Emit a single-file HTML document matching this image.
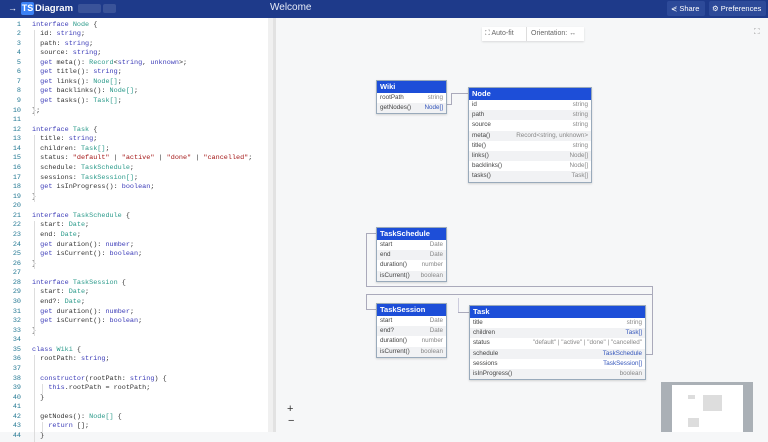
<!DOCTYPE html>
<html><head><meta charset="utf-8"><style>
*{margin:0;padding:0;box-sizing:border-box}
body{width:768px;height:432px;overflow:hidden;font-family:"Liberation Sans",sans-serif;background:#f6f7f8;position:relative}
.hdr{position:absolute;left:0;top:0;width:768px;height:18px;background:#1e3a8a;color:#fff}
.ed{position:absolute;left:0;top:18px;width:268px;height:414px;background:#fff;font-family:"Liberation Mono",monospace;font-size:6.8px;color:#333}
.ln{position:absolute;left:0;width:21px;text-align:right;color:#237893}
.cd{position:absolute;left:32px;white-space:pre;line-height:9px}
.k{color:#3b3bb8}.t{color:#2a9a8a}.s{color:#a31515}
.box{position:absolute;background:#fff;border:1px solid #9ab;box-shadow:0 1px 2px rgba(0,0,0,.15);font-size:6.3px;color:#444}
.box .h{background:#1d4ed8;color:#fff;font-size:7.5px;font-weight:bold;height:12px;line-height:12px;padding-left:3px}
.box .r{height:10.2px;line-height:10.2px;padding:0 3px;display:flex;justify-content:space-between}
.box .r:nth-child(odd){background:#f1f2f4}
.box .r span:last-child{color:#888}
.box .r span.l{color:#3355bb}
.ln2{position:absolute;background:#aab}
.g{position:absolute;width:1px;background:#ddd}
</style></head><body>
<div class="hdr">
<span style="position:absolute;left:8px;top:3px;font-size:9px">→</span>
<span style="position:absolute;left:21px;top:2px;width:13px;height:13px;background:#3b82f6;border-radius:2px;font-size:9px;font-weight:bold;line-height:13px;text-align:center">TS</span>
<span style="position:absolute;left:35px;top:3px;font-size:9.5px;font-weight:bold">Diagram</span>
<span style="position:absolute;left:78px;top:4px;width:23px;height:9px;background:#3a5399;border-radius:2px"></span>
<span style="position:absolute;left:103px;top:4px;width:13px;height:9px;background:#3a5399;border-radius:2px"></span>
<span style="position:absolute;left:270px;top:2px;font-size:10px;color:#e8ecf8">Welcome</span>
<span style="position:absolute;left:667px;top:1px;width:38px;height:15px;background:#2d4a99;border-radius:2px;font-size:7.5px;line-height:15px;padding-left:4px">⋞ Share</span>
<span style="position:absolute;left:709px;top:1px;width:57px;height:15px;background:#2d4a99;border-radius:2px;font-size:7.5px;line-height:15px;padding-left:3px">⚙ Preferences</span>
</div>
<div class="ed" id="ed"></div>
<div style="position:absolute;left:268px;top:18px;width:5px;height:414px;background:#f0f0f0"></div>
<div style="position:absolute;left:273px;top:18px;width:3px;height:414px;background:#e2e2e2"></div>

<div style="position:absolute;left:482px;top:27px;width:102px;height:14px;background:#fff;box-shadow:0 1px 2px rgba(0,0,0,.12);font-size:7px;color:#666;line-height:14px"><span style="padding-left:3px">⛶ Auto-fit</span><span style="position:absolute;left:44px;border-left:1px solid #ddd;padding-left:4px">Orientation: ↔</span></div>
<div style="position:absolute;left:754px;top:27px;font-size:8px;color:#999">⛶</div>

<div class="ln2" style="left:447px;top:104px;width:4px;height:1px"></div>
<div class="ln2" style="left:451px;top:93px;width:1px;height:12px"></div>
<div class="ln2" style="left:451px;top:93px;width:17px;height:1px"></div>
<div class="ln2" style="left:366px;top:233px;width:1px;height:53px"></div>
<div class="ln2" style="left:366px;top:233px;width:10px;height:1px"></div>
<div class="ln2" style="left:366px;top:286px;width:287px;height:1px"></div>
<div class="ln2" style="left:366px;top:294px;width:287px;height:1px"></div>
<div class="ln2" style="left:366px;top:294px;width:1px;height:15px"></div>
<div class="ln2" style="left:366px;top:309px;width:10px;height:1px"></div>
<div class="ln2" style="left:652px;top:286px;width:1px;height:68px"></div>
<div class="ln2" style="left:646px;top:354px;width:7px;height:1px"></div>
<div class="ln2" style="left:458px;top:298px;width:1px;height:14px;background:#ccd"></div>
<div class="ln2" style="left:458px;top:312px;width:11px;height:1px"></div>

<div class="box" style="left:376px;top:80px;width:71px"><div class="h">Wiki</div>
<div class="r"><span>rootPath</span><span>string</span></div>
<div class="r"><span>getNodes()</span><span class="l">Node[]</span></div></div>

<div class="box" style="left:468px;top:87px;width:124px"><div class="h">Node</div>
<div class="r"><span>id</span><span>string</span></div>
<div class="r"><span>path</span><span>string</span></div>
<div class="r"><span>source</span><span>string</span></div>
<div class="r"><span>meta()</span><span>Record&lt;string, unknown&gt;</span></div>
<div class="r"><span>title()</span><span>string</span></div>
<div class="r"><span>links()</span><span>Node[]</span></div>
<div class="r"><span>backlinks()</span><span>Node[]</span></div>
<div class="r"><span>tasks()</span><span>Task[]</span></div></div>

<div class="box" style="left:376px;top:227px;width:71px"><div class="h">TaskSchedule</div>
<div class="r"><span>start</span><span>Date</span></div>
<div class="r"><span>end</span><span>Date</span></div>
<div class="r"><span>duration()</span><span>number</span></div>
<div class="r"><span>isCurrent()</span><span>boolean</span></div></div>

<div class="box" style="left:376px;top:303px;width:71px"><div class="h">TaskSession</div>
<div class="r"><span>start</span><span>Date</span></div>
<div class="r"><span>end?</span><span>Date</span></div>
<div class="r"><span>duration()</span><span>number</span></div>
<div class="r"><span>isCurrent()</span><span>boolean</span></div></div>

<div class="box" style="left:469px;top:305px;width:177px"><div class="h">Task</div>
<div class="r"><span>title</span><span>string</span></div>
<div class="r"><span>children</span><span class="l">Task[]</span></div>
<div class="r"><span>status</span><span>"default" | "active" | "done" | "cancelled"</span></div>
<div class="r"><span>schedule</span><span class="l">TaskSchedule</span></div>
<div class="r"><span>sessions</span><span class="l">TaskSession[]</span></div>
<div class="r"><span>isInProgress()</span><span>boolean</span></div></div>

<div style="position:absolute;left:287px;top:403px;font-size:11px;color:#333">+</div>
<div style="position:absolute;left:288px;top:415px;font-size:11px;color:#333">−</div>
<div style="position:absolute;left:661px;top:382px;width:92px;height:50px;background:#aab0b6"></div>
<div style="position:absolute;left:672px;top:385px;width:71px;height:47px;background:#fff"></div>
<div style="position:absolute;left:688px;top:395px;width:7px;height:4px;background:#ddd"></div>
<div style="position:absolute;left:703px;top:395px;width:19px;height:16px;background:#ddd"></div>
<div style="position:absolute;left:688px;top:418px;width:11px;height:9px;background:#ddd"></div>
<script>
var L=[
'<span class="k">interface</span> <span class="t">Node</span> {',
'  id: <span class="k">string</span>;',
'  path: <span class="k">string</span>;',
'  source: <span class="k">string</span>;',
'  <span class="k">get</span> meta(): <span class="t">Record</span>&lt;<span class="k">string</span>, <span class="k">unknown</span>&gt;;',
'  <span class="k">get</span> title(): <span class="k">string</span>;',
'  <span class="k">get</span> links(): <span class="t">Node[]</span>;',
'  <span class="k">get</span> backlinks(): <span class="t">Node[]</span>;',
'  <span class="k">get</span> tasks(): <span class="t">Task[]</span>;',
'};','',
'<span class="k">interface</span> <span class="t">Task</span> {',
'  title: <span class="k">string</span>;',
'  children: <span class="t">Task[]</span>;',
'  status: <span class="s">"default"</span> | <span class="s">"active"</span> | <span class="s">"done"</span> | <span class="s">"cancelled"</span>;',
'  schedule: <span class="t">TaskSchedule</span>;',
'  sessions: <span class="t">TaskSession[]</span>;',
'  <span class="k">get</span> isInProgress(): <span class="k">boolean</span>;',
'}','',
'<span class="k">interface</span> <span class="t">TaskSchedule</span> {',
'  start: <span class="t">Date</span>;',
'  end: <span class="t">Date</span>;',
'  <span class="k">get</span> duration(): <span class="k">number</span>;',
'  <span class="k">get</span> isCurrent(): <span class="k">boolean</span>;',
'}','',
'<span class="k">interface</span> <span class="t">TaskSession</span> {',
'  start: <span class="t">Date</span>;',
'  end?: <span class="t">Date</span>;',
'  <span class="k">get</span> duration(): <span class="k">number</span>;',
'  <span class="k">get</span> isCurrent(): <span class="k">boolean</span>;',
'}','',
'<span class="k">class</span> <span class="t">Wiki</span> {',
'  rootPath: <span class="k">string</span>;','',
'  <span class="k">constructor</span>(rootPath: <span class="k">string</span>) {',
'    <span class="k">this</span>.rootPath = rootPath;',
'  }','',
'  getNodes(): <span class="t">Node[]</span> {',
'    <span class="k">return</span> [];','  }'];
var T=2.5;
var h='';for(var i=0;i<L.length;i++){var y=T+i*9.57;h+='<div class="ln" style="top:'+y+'px;line-height:9px">'+(i+1)+'</div><div class="cd" style="top:'+y+'px">'+L[i]+'</div>';}
var G=[[1,9],[12,18],[21,25],[28,32],[35,43]];
G.forEach(function(g){h+='<div class="g" style="left:34px;top:'+(T+g[0]*9.57)+'px;height:'+((g[1]-g[0]+1)*9.57)+'px"></div>';});
h+='<div class="g" style="left:42px;top:'+(T+38*9.57)+'px;height:9.57px"></div><div class="g" style="left:42px;top:'+(T+42*9.57)+'px;height:9.57px"></div>';
document.getElementById('ed').innerHTML=h;
</script>
</body></html>
